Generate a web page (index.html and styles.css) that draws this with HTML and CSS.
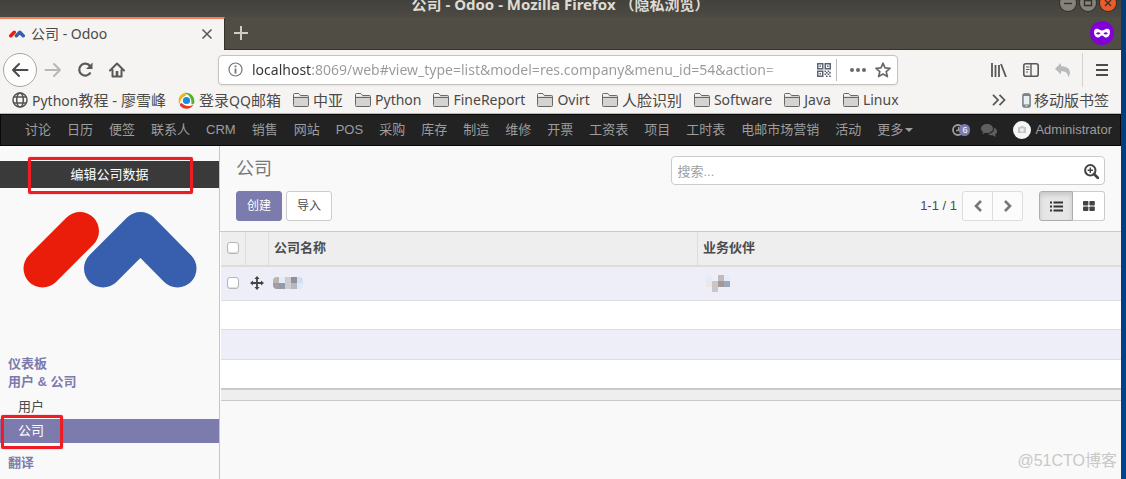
FILE: index.html
```html
<!DOCTYPE html>
<html lang="zh-CN">
<head>
<meta charset="utf-8">
<meta name="viewport" content="width=device-width, initial-scale=1">
<title>公司 - Odoo</title>
<link rel="stylesheet" href="styles.css">
</head>
<body>
<svg class="defs" aria-hidden="true">
  <symbol id="folder" viewBox="0 0 16 14"><path d="M.5 11.5v-10q0-1 1-1h4.300l1.700 2h7q1 0 1 1v9q0 1-1 1h-13q-1 0-1-1z" fill="#d5d3d1" stroke="#6a6866"/><path d="M1 4.500h14" stroke="#6a6866"/><path d="M1 3.500V1h4.800l1.500 2.500z" fill="#f3f2f0"/></symbol>
  <symbol id="mark" viewBox="0 0 174 77"><path d="M19.500 57.500 57 20" stroke="#ea1c0a"/><path d="M80 57.500 117.500 20 154.500 57.500" stroke="#385fad"/></symbol>
</svg>
<div class="desktop">
<div class="window">
  <header class="titlebar">
    <div class="window-title">公司 - Odoo - Mozilla Firefox （隐私浏览）</div>
    <div class="window-buttons">
      <button class="wm" aria-label="最小化"><svg viewBox="0 0 16 16"><path d="M4 8.500h8"/></svg></button>
      <button class="wm" aria-label="最大化"><svg viewBox="0 0 16 16"><path d="M4.500 5.500h7v5h-7z"/></svg></button>
      <button class="wm wm-close" aria-label="关闭"><svg viewBox="0 0 16 16"><path d="M5 5l6 6M11 5l-6 6"/></svg></button>
    </div>
  </header>
  <div class="tabs">
    <div class="tab">
      <svg class="favicon"><use href="#mark"/></svg>
      <span class="tab-title">公司 - Odoo</span>
      <button class="plain" aria-label="关闭标签页"><svg width="12" height="12" viewBox="0 0 12 12"><path d="M1.500 1.500l9 9M10.500 1.500l-9 9" stroke="#5c5a57" stroke-width="1.600"/></svg></button>
    </div>
    <button class="plain new-tab" aria-label="新标签页"><svg width="14" height="14" viewBox="0 0 14 14"><path d="M7 0v14M0 7h14" stroke="#cfccc5" stroke-width="2"/></svg></button>
    <svg class="mask" width="24" height="24" viewBox="0 0 24 24"><circle cx="12" cy="12" r="12" fill="#8000d7"/><path fill-rule="evenodd" fill="#fff" d="M4 11C4 8 6 7.600 8 8c2 .4 2.500 1.500 4 1.500S14 8.400 16 8c2-.4 4 0 4 3 0 3-1.500 5.500-4 5.500-2 0-2.500-2-4-2s-2 2-4 2C5.500 16.500 4 14 4 11zM6 12.500q2.500-2.500 4.500.3Q8 14.500 6 12.500zM18 12.500q-2.500-2.500-4.500.3Q16 14.500 18 12.500z"/></svg>
  </div>
  <div class="toolbar">
    <button class="back" aria-label="后退"><svg width="18" height="16" viewBox="0 0 18 16" fill="none" stroke="#4d4b49" stroke-width="2" stroke-linecap="round" stroke-linejoin="round"><path d="M16.500 8H2M8 2 2 8l6 6"/></svg></button>
    <button class="plain forward" aria-label="前进" disabled><svg width="18" height="16" viewBox="0 0 18 16" fill="none" stroke="#b9b7b5" stroke-width="2" stroke-linecap="round" stroke-linejoin="round"><path d="M1.500 8H16M10 2l6 6-6 6"/></svg></button>
    <button class="plain reload" aria-label="刷新"><svg width="16" height="16" viewBox="0 0 16 16" fill="none"><path d="M13 4A6 6 0 1 0 13.500 10.500" stroke="#5b5957" stroke-width="2.200"/><path d="M15.500.5v6.500H9z" fill="#5b5957"/></svg></button>
    <button class="plain" aria-label="主页"><svg width="16" height="16" viewBox="0 0 16 16" fill="none" stroke="#5b5957" stroke-width="2" stroke-linejoin="round" stroke-linecap="round"><path d="M1 8.500 8 1.500l7 7M3.500 8v6.500h9V8"/><path d="M8 9v5" stroke-width="2.600" stroke-linecap="butt"/></svg></button>
    <div class="urlbar">
      <svg width="15" height="15" viewBox="0 0 15 15" fill="none" stroke="#777573"><circle cx="7.500" cy="7.500" r="6.500" stroke-width="1.200"/><path d="M7.500 6.500v5M7.500 3.500v1.800" stroke-width="1.800"/></svg>
      <input class="url" aria-label="地址" value="localhost:8069/web#view_type=list&amp;model=res.company&amp;menu_id=54&amp;action=">
      <svg width="14" height="14" viewBox="0 0 14 14" fill="none" stroke="#5b6270"><path d="M.75.75h5v5h-5zM8.250.75h5v5h-5zM.75 8.250h5v5h-5z" stroke-width="1.500"/><path d="M3.250 2.500v1.500M10.750 2.500v1.500M3.250 10v1.500" stroke-width="1.500"/><path d="M7.500 8.250h6.500M7.500 11.250h6.500" stroke-width="1.500" stroke-dasharray="1.600 1.600"/><path d="M9 9.750h5M9 13.250h5" stroke-width="1.500" stroke-dasharray="1.600 1.600"/></svg>
      <span class="url-sep"></span>
      <button class="plain" aria-label="页面操作"><svg width="16" height="6" viewBox="0 0 16 6" fill="#6b6967"><circle cx="2" cy="3" r="2"/><circle cx="8" cy="3" r="2"/><circle cx="14" cy="3" r="2"/></svg></button>
      <button class="plain" aria-label="收藏"><svg width="16" height="16" viewBox="0 0 16 16" fill="none" stroke="#6b6967" stroke-width="1.700" stroke-linejoin="round"><path d="M8 1.200l2 4.600 5 .5-3.800 3.300 1.200 5L8 12l-4.400 2.600 1.200-5L1 6.300l5-.5z"/></svg></button>
    </div>
    <div class="tools">
      <button class="plain" aria-label="书库"><svg width="16" height="14" viewBox="0 0 16 14" stroke="#5b5957" stroke-width="1.800"><path d="M1 0v14M4.500 2v12M8 2v12M10 1l5 13"/></svg></button>
      <button class="plain" aria-label="侧栏"><svg width="16" height="14" viewBox="0 0 16 14" fill="none" stroke="#5b5957"><rect x=".8" y=".8" width="14.400" height="12.400" rx="2" stroke-width="1.600"/><path d="M8 1v12" stroke-width="1.400"/><path d="M3 4h3.500M3 6.500h3.500M3 9h2"/></svg></button>
      <button class="plain" aria-label="撤销"><svg width="15" height="14" viewBox="0 0 15 14"><path d="M6 0v3.200c5.500 0 9 2.300 9 6.300 0 2-.8 3.500-2 4.500.3-4-2.500-5.800-7-5.800v3.300L0 5.700z" fill="#b7b9bc"/></svg></button>
      <span class="tool-sep"></span>
      <button class="plain" aria-label="菜单"><svg width="12" height="12" viewBox="0 0 12 12" stroke="#4d4b49" stroke-width="2"><path d="M0 1h12M0 6h12M0 11h12"/></svg></button>
    </div>
  </div>
  <nav class="bookmarks" aria-label="书签">
    <a href="#"><svg width="16" height="16" viewBox="0 0 16 16" fill="none" stroke="#555351" stroke-width="1.500"><circle cx="8" cy="8" r="7"/><ellipse cx="8" cy="8" rx="3.300" ry="7"/><path d="M2 5h12M2 11h12"/></svg><span><span class="latin">Python</span>教程 - 廖雪峰</span></a>
    <a href="#"><svg width="17" height="17" viewBox="0 0 17 17"><circle cx="8.500" cy="8.500" r="7" fill="#fff"/><path d="M6 1C12-.5 17 4 16.300 11c-1 1.500-2.300 1.500-3 1C14 7 12 3 6 1z" fill="#5cae2d"/><path d="M15.500 12.500C12.500 18 5.500 18 2 13.500c-.3-1.500.5-2.500 1.500-2.500 3.500 3.500 8 4 12 1.500z" fill="#e83a1c"/><path d="M1.500 12.500C-1 7 2 2 6.500 1 8 1.500 8.500 2.500 8 3.500 4 5 2.500 8 1.500 12.500z" fill="#f6b21a"/><circle cx="8.500" cy="8.500" r="3.600" fill="#1b8de0"/></svg><span>登录<span class="latin">QQ</span>邮箱</span></a>
    <a href="#"><svg class="folder"><use href="#folder"/></svg>中亚</a>
    <a href="#" class="latin"><svg class="folder"><use href="#folder"/></svg>Python</a>
    <a href="#" class="latin"><svg class="folder"><use href="#folder"/></svg>FineReport</a>
    <a href="#" class="latin"><svg class="folder"><use href="#folder"/></svg>Ovirt</a>
    <a href="#"><svg class="folder"><use href="#folder"/></svg>人脸识别</a>
    <a href="#" class="latin"><svg class="folder"><use href="#folder"/></svg>Software</a>
    <a href="#" class="latin"><svg class="folder"><use href="#folder"/></svg>Java</a>
    <a href="#" class="latin"><svg class="folder"><use href="#folder"/></svg>Linux</a>
    <button class="plain overflow" aria-label="更多书签"><svg width="14" height="12" viewBox="0 0 14 12" fill="none" stroke="#5b5957" stroke-width="1.800"><path d="M1 .8 6 6l-5 5.200M7.500.8l5 5.200-5 5.200"/></svg></button>
    <a href="#" class="mobile"><svg width="9" height="15" viewBox="0 0 9 15"><rect x=".7" y=".7" width="7.600" height="13.600" rx="1.500" fill="#7a828a" stroke="#7a828a"/><path d="M1.700 3h5.600v8.500H1.700z" fill="#e9eef0"/><path d="M3.500 13h2" stroke="#fff"/></svg>移动版书签</a>
  </nav>

  <nav class="odoo-nav">
    <a href="#">讨论</a><a href="#">日历</a><a href="#">便签</a><a href="#">联系人</a><a href="#">CRM</a><a href="#">销售</a><a href="#">网站</a><a href="#">POS</a><a href="#">采购</a><a href="#">库存</a><a href="#">制造</a><a href="#">维修</a><a href="#">开票</a><a href="#">工资表</a><a href="#">项目</a><a href="#">工时表</a><a href="#">电邮市场营销</a><a href="#">活动</a><a href="#" class="more">更多<span class="caret"></span></a>
    <div class="systray">
      <button class="plain activity" aria-label="活动"><svg width="12" height="12" viewBox="0 0 12 12" fill="none" stroke="#9d9d9d"><circle cx="6" cy="6" r="5" stroke-width="1.800"/><path d="M6.500 3v3.500H4" stroke-width="1.300"/></svg><span class="badge">6</span></button>
      <button class="plain" aria-label="对话"><svg width="16" height="13" viewBox="0 0 16 13" fill="#5f5f5f"><path d="M6 0c3.300 0 6 2 6 4.500S9.300 9 6 9q-1 0-1.800-.2Q2.700 10 1 10q1-1 1.200-2Q0 6.800 0 4.500C0 2 2.700 0 6 0z"/><path d="M13 3.500c4 2 3.800 5.500 1 7q.2 1 1.200 2-2 0-3.400-1.300-3 .5-5-1.200C10.500 10 13.500 7.500 13 3.500z"/></svg></button>
      <a href="#" class="user"><svg width="18" height="18" viewBox="0 0 18 18"><circle cx="9" cy="9" r="9" fill="#f6f6f6"/><path d="M5 6h2l1-1h2l1 1h2v6H5z" fill="#c6c6c6"/><circle cx="9" cy="9" r="2" fill="#eee"/></svg>Administrator</a>
    </div>
  </nav>

  <div class="page">
    <aside class="sidebar">
      <a href="#" class="edit-company">编辑公司数据<span class="callout callout-edit"></span></a>
      <svg class="logo"><use href="#mark"/></svg>
      <nav class="menu">
        <a href="#" class="section">仪表板</a>
        <a href="#" class="section">用户 &amp; 公司</a>
        <a href="#" class="item first">用户</a>
        <a href="#" class="item active">公司<span class="callout callout-item"></span></a>
        <a href="#" class="section last">翻译</a>
      </nav>
    </aside>
    <main class="main">
      <div class="panel">
        <h1>公司</h1>
        <div class="search">
          <input type="text" placeholder="搜索..." aria-label="搜索">
          <button class="plain" aria-label="高级搜索"><svg width="15" height="15" viewBox="0 0 15 15" fill="none" stroke="#444"><circle cx="6.300" cy="6.300" r="5.200" stroke-width="2"/><path d="M10 10l4 4" stroke-width="2.600" stroke-linecap="round"/><path d="M6.300 3.600v5.400M3.600 6.300h5.400" stroke-width="1.400"/></svg></button>
        </div>
        <div class="actions"><button class="btn primary">创建</button><button class="btn">导入</button></div>
        <div class="views">
          <span class="pager">1-1 / 1</span>
          <div class="group muted">
            <button aria-label="上一页"><svg width="8" height="12" viewBox="0 0 8 12" fill="none" stroke="#777" stroke-width="2.600"><path d="M7 1 2 6l5 5"/></svg></button><button aria-label="下一页"><svg width="8" height="12" viewBox="0 0 8 12" fill="none" stroke="#777" stroke-width="2.600"><path d="M1 1l5 5-5 5"/></svg></button>
          </div>
          <div class="group">
            <button class="on" aria-label="列表"><svg width="13" height="11" viewBox="0 0 13 11" stroke="#333" stroke-width="2"><path d="M0 1.500h2M3.500 1.500H13M0 5.500h2M3.500 5.500H13M0 9.500h2M3.500 9.500H13"/></svg></button><button aria-label="看板"><svg width="12" height="10" viewBox="0 0 12 10" fill="#444"><rect width="5.400" height="4.500" rx=".8"/><rect x="6.400" width="5.400" height="4.500" rx=".8"/><rect y="5.500" width="5.400" height="4.500" rx=".8"/><rect x="6.400" y="5.500" width="5.400" height="4.500" rx=".8"/></svg></button>
          </div>
        </div>
      </div>
      <table class="list">
        <colgroup><col class="c-check"><col class="c-move"><col class="c-name"><col></colgroup>
        <thead><tr><th><input type="checkbox" aria-label="全选"></th><th></th><th>公司名称</th><th>业务伙伴</th></tr></thead>
        <tbody>
          <tr class="record"><td><input type="checkbox" aria-label="选择记录"></td>
            <td><svg class="move" width="14" height="14" viewBox="0 0 14 14"><path d="M7 1.500v11M1.500 7h11" stroke="#444" stroke-width="1.800"/><path d="M7 0l2.600 3H4.400zM7 14l2.600-3H4.400zM0 7l3-2.600v5.200zM14 7l-3-2.600v5.200z" fill="#444"/></svg></td>
            <td><svg class="blur" width="30" height="12" viewBox="0 0 30 12" shape-rendering="crispEdges"><path d="M0 0h6v6H0z" fill="#b9b6b0"/><path d="M6 0h6v6H6z" fill="#dfeef8"/><path d="M12 0h6v12h-6z" fill="#cfcbd0"/><path d="M18 0h6v6h-6z" fill="#929199"/><path d="M24 0h6v6h-6z" fill="#d3def3"/><path d="M0 6h6v6H0z" fill="#a39da3"/><path d="M6 6h6v6H6z" fill="#939aaa"/><path d="M18 6h6v6h-6z" fill="#b4b8be"/><path d="M24 6h6v6h-6z" fill="#dfe8f8"/></svg></td>
            <td><svg class="blur partner" width="24" height="17" viewBox="0 0 24 17" shape-rendering="crispEdges"><path d="M0 0h6v6H0z" fill="#e2eef7"/><path d="M12 0h6v6h-6z" fill="#c0bab9"/><path d="M18 0h6v6h-6z" fill="#e5ebf8"/><path d="M0 6h6v6H0z" fill="#ebe7e3"/><path d="M6 6h6v11H6z" fill="#cac6c8"/><path d="M12 6h6v6h-6z" fill="#a59899"/><path d="M18 6h6v6h-6z" fill="#9ca9bd"/></svg></td></tr>
          <tr><td colspan="4"></td></tr>
          <tr><td colspan="4"></td></tr>
          <tr><td colspan="4"></td></tr>
        </tbody>
        <tfoot><tr><td colspan="4"></td></tr></tfoot>
      </table>
      <div class="watermark">@51CTO博客</div>
    </main>
  </div>
</div>
</div>
</body>
</html>
```
FILE: styles.css
```css
* { box-sizing: border-box; }
body { margin: 0; font: 13px/18px "Liberation Sans", "Noto Sans CJK SC", sans-serif; color: #4c4c4c; overflow: hidden; }
a { color: inherit; text-decoration: none; }
button, input { font: inherit; color: inherit; }
svg { display: block; flex: none; }
.defs { position: absolute; width: 0; height: 0; }
.plain { border: 0; padding: 0; background: none; display: flex; align-items: center; }
.desktop { min-height: 100vh; padding-right: 5px; background: linear-gradient(#0a3a70, #003e85 50%, #00438f); display: flex; }
.window { flex: 1; min-width: 0; display: flex; flex-direction: column; background: #f9f9f9; }

.titlebar, .tabs, .toolbar, .bookmarks { font-family: "Noto Sans", "Noto Sans CJK SC", sans-serif; }
.titlebar { height: 17px; padding: 0 5px 2px; background: linear-gradient(#43413b, #4c4a43); color: #dfdbd2; overflow: hidden; display: grid; grid-template-columns: 1fr auto 1fr; grid-template-rows: 100%; align-items: end; }
.window-title { grid-column: 2; font-size: 15px; line-height: 22px; font-weight: 700; white-space: nowrap; }
.window-buttons { display: flex; justify-content: flex-end; gap: 4px; padding-bottom: 4px; }
.wm { width: 16px; height: 16px; border: 0; padding: 0; border-radius: 50%; background: #85827a; box-shadow: 0 0 0 1px #33312c; }
.wm svg { fill: none; stroke: #35332e; stroke-width: 1.4; }
.wm-close { background: #ee5b2b; }

.tabs { display: flex; align-items: center; height: 33px; background: #504d45; border-bottom: 1px solid #34322d; padding-right: 7px; }
.tab { align-self: stretch; margin-bottom: -1px; width: 225px; display: flex; align-items: center; padding: 0 11px 1px 9px; gap: 6px; border-top: 2px solid #f4805a; border-right: 1px solid #34322d; background: #f5f4f2; font-size: 14px; color: #4c4a48; }
.favicon { width: 16px; height: 8px; }
.favicon, .logo { fill: none; stroke-width: 38; stroke-linecap: round; stroke-linejoin: round; }
.tab-title { flex: 1; }
.new-tab { margin-left: 9px; }
.mask { margin-left: auto; }

.toolbar { display: flex; align-items: center; height: 39px; padding: 0 13px 0 3px; background: #f5f4f2; }
.back { width: 34px; height: 34px; padding: 0; border: 1px solid #a9a6a3; border-radius: 50%; background: #fdfdfd; display: flex; align-items: center; justify-content: center; }
.forward { margin-left: 7px; }
.reload { margin: 0 16px 0 15px; }
.urlbar { flex: 1; min-width: 0; margin-left: 93px; height: 30px; padding: 0 6px 0 9px; border: 1px solid #c6c2be; border-radius: 4px; background: #fff; display: flex; align-items: center; gap: 9px; box-shadow: 0 1px 2px #0001; }
.url { flex: 1; min-width: 0; border: 0; padding: 0; margin-right: 22px; height: 24px; font-size: 14px; color: transparent; background: linear-gradient(90deg, #333 0 60px, #999 60px calc(100% - 20px), transparent) text; }
.url-sep { width: 1px; height: 22px; margin: 0 4px 0 -4px; background: #bbb; }
.tools { display: flex; align-items: center; gap: 16px; margin-left: 93px; }
.tool-sep { width: 1px; height: 34px; background: #d5d2cf; margin: 0 -3px 0 -4px; }

.bookmarks { display: flex; align-items: center; height: 25px; padding: 0 12px 2px; gap: 12px; background: #f5f4f2; border-bottom: 1px solid #bcb9b4; font-size: 15px; color: #4c4a48; white-space: nowrap; }
.bookmarks a { display: flex; align-items: center; gap: 4px; }
.latin { font-size: 14px; }
.bookmarks .mobile { gap: 3px; margin-left: 4px; }
.folder { width: 16px; height: 14px; }
.overflow { margin-left: auto; }

.odoo-nav { display: flex; align-items: center; height: 32px; padding: 0 8px 0 16px; border: 1px solid #080808; background: #222; color: #9d9d9d; white-space: nowrap; }
.odoo-nav > a { padding: 0 8px; }
.more { display: flex; align-items: center; gap: 2px; }
.caret { border: 4px solid transparent; border-top-color: #9d9d9d; border-bottom: 0; }
.systray { margin-left: auto; display: flex; align-items: center; gap: 11px; }
.activity { position: relative; padding-right: 6px; }
.badge { position: absolute; right: 0; top: 0; padding: 0 3px; border-radius: 6px; background: #7c7bad; color: #fff; font-size: 9px; line-height: 12px; }
.user { display: flex; align-items: center; gap: 4px; margin-left: 5px; }

.page { flex: 1; display: flex; }
.sidebar { width: 220px; flex: none; border-right: 1px solid #c5c5c5; padding-top: 15px; }
.edit-company { position: relative; display: block; padding: 5px 0 4px; background: #3a3a3a; color: #fff; text-align: center; }
.callout { position: absolute; border: 3px solid #ee1c25; border-radius: 2px; box-shadow: 0 0 1px #ee1c25; }
.callout-edit { left: 28px; right: 26px; top: -4px; bottom: -6px; }
.callout-item { left: 1px; width: 62px; top: -4px; bottom: -6px; }
.logo { width: 174px; height: 77px; margin: 23px auto 67px 23px; }
.menu a { display: block; }
.section { padding: 0 8px; color: #7c7bad; font-weight: 700; }
.menu .item { position: relative; padding: 3px 18px; }
.menu .first { margin-top: 4px; }
.menu .active { background: #7c7bad; color: #fff; }
.menu .last { margin-top: 11px; }

.main { flex: 1; min-width: 0; position: relative; }
.panel { display: grid; grid-template-columns: 1fr 1fr; gap: 6px 0; padding: 10px 16px 10px; border-bottom: 1px solid #cacaca; }
h1 { margin: 0; font-size: 18px; line-height: 26px; font-weight: 400; color: #777; }
.search { display: flex; align-items: center; height: 29px; padding: 2px 5px 0 6px; border: 1px solid #ccc; border-radius: 4px; background: #fff; }
.search input { flex: 1; min-width: 0; border: 0; padding: 0; outline: 0; background: none; }
.search input::placeholder { color: #a0a0a0; opacity: 1; }
.actions { display: flex; gap: 4px; }
.btn { height: 30px; padding: 0 10px; border: 1px solid #ccc; border-radius: 3px; background: #fff; font-size: 12px; }
.primary { background: #7c7bad; border-color: #7c7bad; color: #fff; }
.views { display: flex; justify-content: flex-end; align-items: center; }
.group { display: flex; margin-left: 16px; }
.group button { width: 32px; height: 30px; padding: 0; display: flex; align-items: center; justify-content: center; border: 1px solid #ccc; background: #fff; }
.group button + button { border-left: 0; border-radius: 0 3px 3px 0; }
.group button:first-child { border-radius: 3px 0 0 3px; }
.group .on { width: 34px; background: #e6e6e6; border-color: #adadad; box-shadow: inset 0 3px 5px #0002; }
.group.muted { margin-left: 5px; }
.muted button { width: 31px; background: #fcfcfc; border-color: #ddd; }
.muted button + button { width: 30px; }

.list { width: 100%; table-layout: fixed; border-spacing: 0; padding-left: 1px; background: #fff; }
.c-check { width: 24px; }
.c-move { width: 23px; }
.c-name { width: 429px; }
.list th, .list td { padding: 0 5px 1px; text-align: left; }
.list th { height: 35px; background: #eee; border-bottom: 2px solid #ddd; }
.list th + th { border-left: 1px solid #ddd; }
.list tbody td { height: 29px; border-bottom: 1px solid #ddd; }
.list tbody tr:nth-child(odd) { background: #eeeef8; }
.list tbody tr:nth-child(odd) td { height: 30px; }
.list tbody tr.record td { height: 34px; }
.list tbody tr:last-child td { height: 28px; border-bottom: 0; }
.list tfoot td { height: 13px; background: #eee; border-top: 2px solid #cacaca; border-bottom: 1px solid #cacaca; }
.list input { appearance: none; display: block; width: 12px; height: 12px; margin: 0 1px; border: 1px solid #b5b5b5; border-radius: 3px; background: #fff; box-shadow: inset 0 -1px 1px #ddd; }
.blur { border-radius: 4px; }
.partner { margin-left: 4px; }
.watermark { position: absolute; right: 4px; bottom: 9px; font-size: 16px; color: #c8c8c8; }
```
